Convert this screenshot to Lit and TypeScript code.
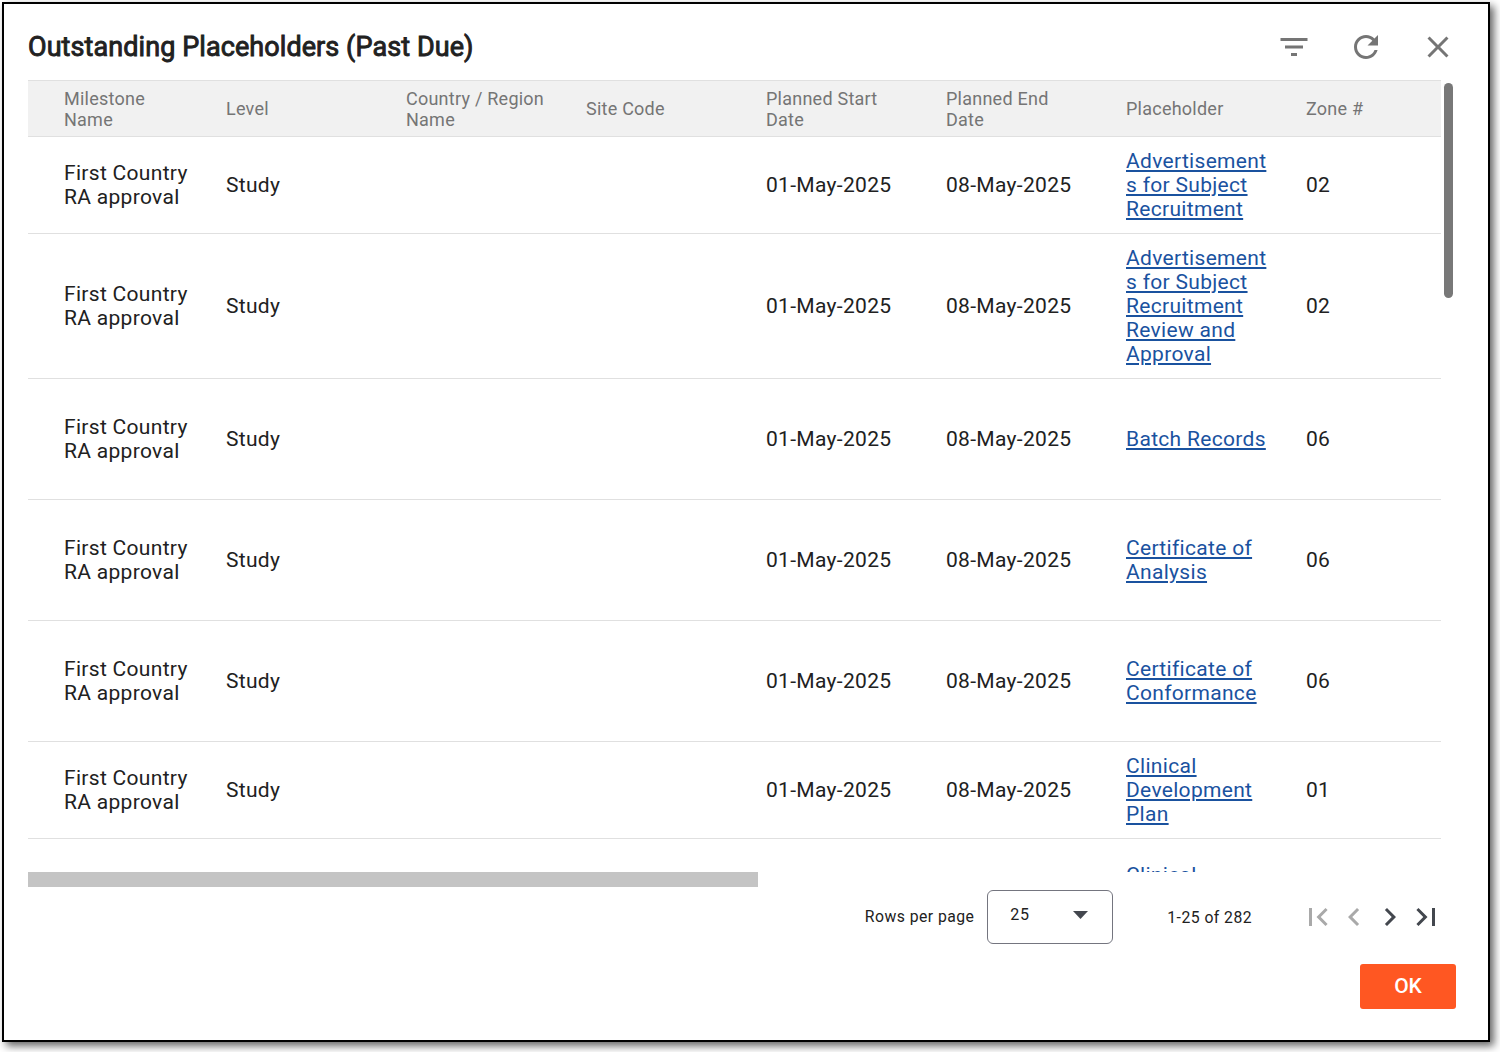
import { LitElement, html, css, svg } from "lit";
import { customElement } from "lit/decorators.js";

interface Row {
  height: number;
  milestone: string;
  level: string;
  start: string;
  end: string;
  placeholder: string;
  zone: string;
}

const HEADERS = [
  "Milestone Name",
  "Level",
  "Country / Region Name",
  "Site Code",
  "Planned Start Date",
  "Planned End Date",
  "Placeholder",
  "Zone #",
];

const row = (height: number, placeholder: string, zone: string): Row => ({
  height,
  milestone: "First Country RA approval",
  level: "Study",
  start: "01-May-2025",
  end: "08-May-2025",
  placeholder,
  zone,
});

const ROWS: Row[] = [
  row(97, "Advertisements for Subject Recruitment", "02"),
  row(145, "Advertisements for Subject Recruitment Review and Approval", "02"),
  row(121, "Batch Records", "06"),
  row(121, "Certificate of Analysis", "06"),
  row(121, "Certificate of Conformance", "06"),
  row(97, "Clinical Development Plan", "01"),
];

@customElement("app-root")
export class AppRoot extends LitElement {
  static styles = css`
    :host {
      display: block;
      box-sizing: border-box;
      height: 1052px;
      padding: 2px 10px 10px 2px;
      overflow: hidden;
      background: #fff;
      font-family: Roboto, "Liberation Sans", sans-serif;
      color: #212121;
    }
    * {
      box-sizing: border-box;
    }
    svg {
      display: block;
    }
    .dialog {
      display: flex;
      flex-direction: column;
      height: 1040px;
      border: 2px solid #000;
      padding: 0 32px 0 24px;
      background: #fff;
      box-shadow: 4px 4px 8px rgba(0, 0, 0, 0.6);
    }
    .head {
      display: flex;
      justify-content: space-between;
      align-items: center;
      height: 76px;
      padding-top: 10px;
    }
    h1 {
      margin: 0;
      font-size: 27px;
      font-weight: 400;
      line-height: 36px;
      letter-spacing: 0.08px;
      -webkit-text-stroke: 0.9px #212121;
      white-space: nowrap;
    }
    .tools {
      display: flex;
      gap: 36px;
      color: #757575;
    }
    button {
      border: 0;
      padding: 0;
      background: none;
      color: inherit;
      font: inherit;
    }
    .body {
      display: flex;
      height: 792px;
      gap: 3px;
    }
    .table {
      width: 1413px;
      overflow: hidden;
    }
    .line {
      display: grid;
      grid-template-columns: repeat(8, 180px);
      align-items: center;
      border-bottom: 1px solid #e0e0e0;
      font-size: 21px;
      line-height: 24px;
      letter-spacing: 0.31px;
    }
    .line.titles {
      height: 57px;
      border-top: 1px solid #e0e0e0;
      background: #f1f1f1;
      color: #757575;
      font-size: 18px;
      line-height: 21px;
      letter-spacing: 0.24px;
    }
    .cell {
      padding: 0 18px;
      overflow-wrap: anywhere;
    }
    .cell:first-child {
      padding: 0 14px 0 36px;
    }
    a {
      color: #1a529f;
      text-decoration: underline;
    }
    .vbar {
      width: 9px;
      height: 215px;
      margin-top: 3px;
      border-radius: 5px;
      background: #787878;
    }
    .hbar {
      width: 730px;
      height: 15px;
      background: #c4c4c4;
    }
    .pager {
      display: flex;
      align-items: center;
      justify-content: flex-end;
      height: 54px;
      margin-top: 3px;
      padding-right: 12px;
      font-size: 15.75px;
      letter-spacing: 0.45px;
    }
    .select {
      display: flex;
      justify-content: space-between;
      align-items: center;
      width: 126px;
      height: 54px;
      margin: 0 54px 0 13px;
      padding: 0 24px 5px 22px;
      border: 1px solid #74757f;
      border-radius: 6px;
      font-size: 16px;
      letter-spacing: 0.8px;
    }
    .rows {
      padding-bottom: 2px;
    }
    .range {
      padding-top: 1px;
    }
    .nav {
      display: flex;
      margin-left: 48px;
      color: #43474e;
    }
    .off {
      color: #a9a9a9;
    }
    .foot {
      display: flex;
      justify-content: flex-end;
      padding-top: 20px;
    }
    .ok {
      width: 96px;
      height: 45px;
      padding-bottom: 2px;
      border-radius: 3px;
      background: #ff5722;
      color: #fff;
      font-size: 21px;
      font-weight: 500;
    }
  `;

  private icon(d: string) {
    return html`<svg width="36" height="36" viewBox="0 0 24 24" fill="currentColor">
      ${svg`<path d=${d} />`}
    </svg>`;
  }

  private line(r: Row) {
    return html`<div class="line" style="height:${r.height}px">
      <div class="cell">${r.milestone}</div>
      <div class="cell">${r.level}</div>
      <div class="cell"></div>
      <div class="cell"></div>
      <div class="cell">${r.start}</div>
      <div class="cell">${r.end}</div>
      <div class="cell"><a>${r.placeholder}</a></div>
      <div class="cell">${r.zone}</div>
    </div>`;
  }

  render() {
    return html`<div class="dialog">
      <div class="head">
        <h1>Outstanding Placeholders (Past Due)</h1>
        <div class="tools">
          <button>${this.icon("M10 18h4v-2h-4v2zM3 6v2h18V6H3zm3 7h12v-2H6v2z")}</button>
          <button>
            ${this.icon(
              "M17.65 6.35C16.2 4.9 14.21 4 12 4c-4.42 0-7.99 3.58-7.99 8s3.57 8 7.99 8c3.73 0 6.84-2.55 7.73-6h-2.08c-.82 2.33-3.04 4-5.65 4-3.31 0-6-2.69-6-6s2.69-6 6-6c1.66 0 3.14.69 4.22 1.78L13 11h7V4l-2.35 2.35z"
            )}
          </button>
          <button>
            ${this.icon(
              "M19 6.41L17.59 5 12 10.59 6.41 5 5 6.41 10.59 12 5 17.59 6.41 19 12 13.41 17.59 19 19 17.59 13.41 12z"
            )}
          </button>
        </div>
      </div>
      <div class="body">
        <div class="table">
          <div class="line titles">${HEADERS.map((h) => html`<div class="cell">${h}</div>`)}</div>
          ${ROWS.map((r) => this.line(r))}
          <div class="line" style="height:97px">
            <div class="cell"></div>
            <div class="cell"></div>
            <div class="cell"></div>
            <div class="cell"></div>
            <div class="cell"></div>
            <div class="cell"></div>
            <div class="cell"><a>Clinical<br />&nbsp;</a></div>
          </div>
        </div>
        <div class="vbar"></div>
      </div>
      <div class="hbar"></div>
      <div class="pager">
        <span class="rows">Rows per page</span>
        <div class="select">
          <span>25</span>
          <svg width="15" height="8" viewBox="0 0 15 8"><path d="M0 0h15L7.5 8z" fill="#43474e" /></svg>
        </div>
        <span class="range">1-25 of 282</span>
        <div class="nav">
          <button class="off">${this.icon("M18.41 16.59L13.82 12l4.59-4.59L17 6l-6 6 6 6zM6 6h2v12H6z")}</button>
          <button class="off">${this.icon("M15.41 7.41L14 6l-6 6 6 6 1.41-1.41L10.83 12z")}</button>
          <button>${this.icon("M10 6L8.59 7.41 13.17 12l-4.58 4.59L10 18l6-6z")}</button>
          <button>${this.icon("M5.59 7.41L10.18 12l-4.59 4.59L7 18l6-6-6-6zM16 6h2v12h-2z")}</button>
        </div>
      </div>
      <div class="foot"><button class="ok">OK</button></div>
    </div>`;
  }
}
